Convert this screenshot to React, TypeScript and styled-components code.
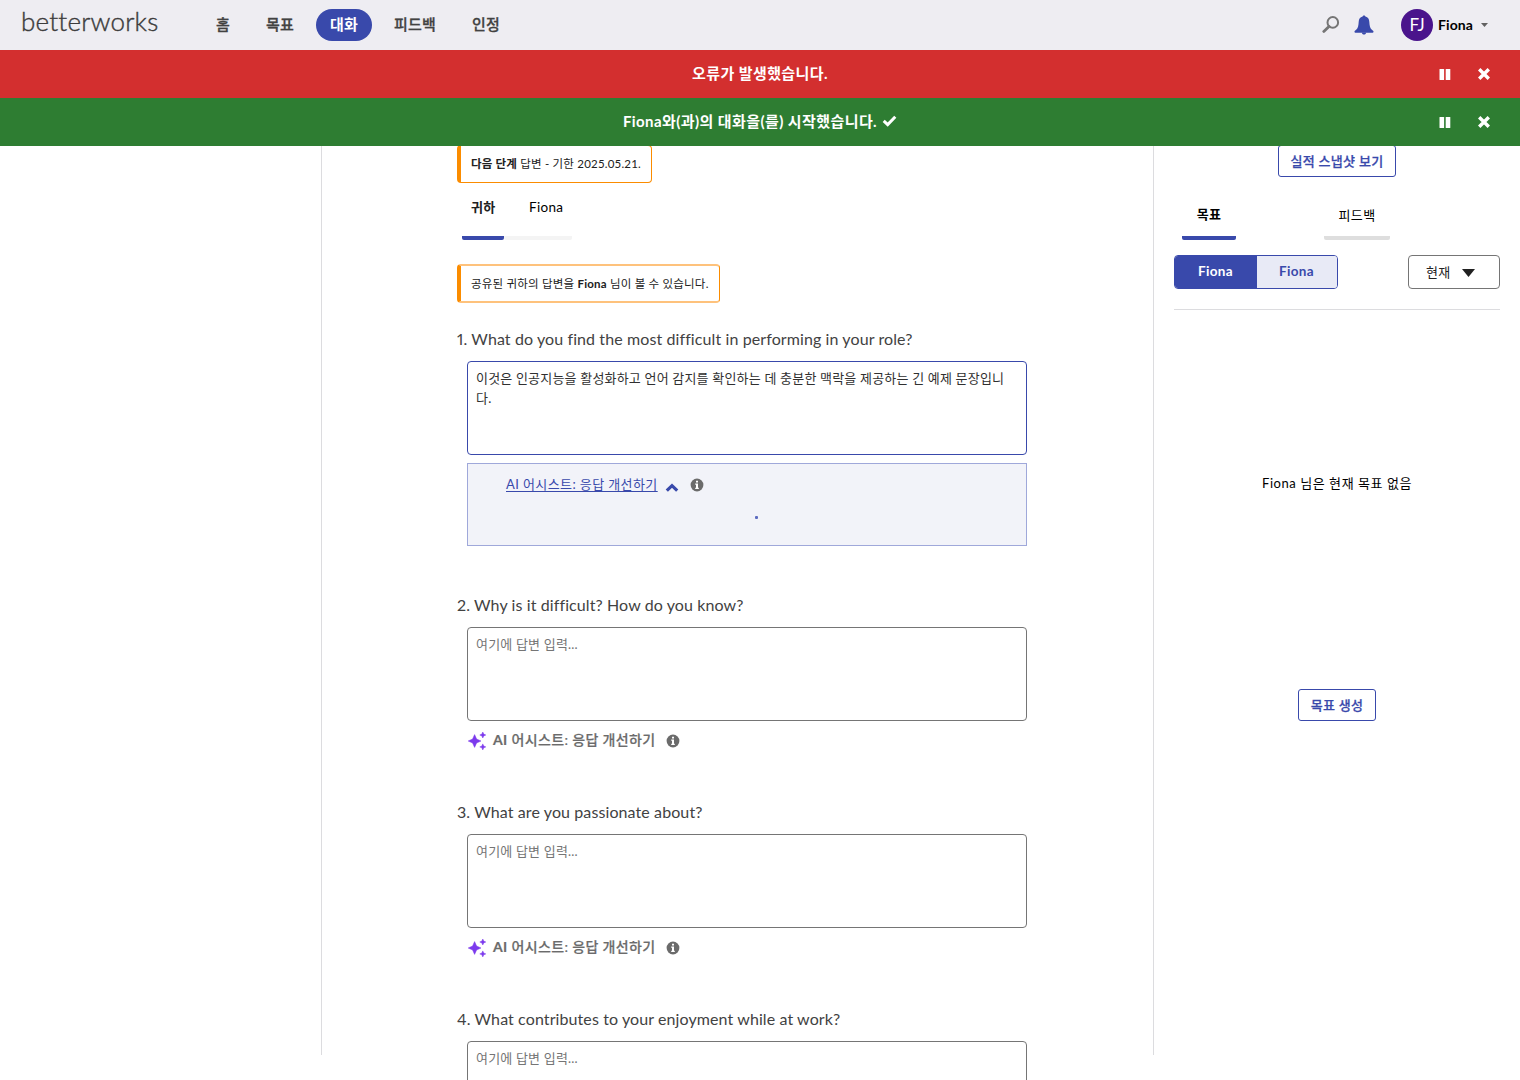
import React from 'react';
import styled, { createGlobalStyle } from 'styled-components';

const Global = createGlobalStyle`
  *, *::before, *::after { box-sizing: border-box; }
  body { margin: 0; background: #fff; overflow: hidden; }
  button, textarea { font: inherit; letter-spacing: inherit; }
`;

const BLUE = '#3949ab';

const Page = styled.div`
  height: 1080px;
  overflow: hidden;
  display: flex;
  flex-direction: column;
  font-family: Lato, 'Noto Sans CJK KR', sans-serif;
  font-size: 13px;
  letter-spacing: 0.3px;
  color: #212121;
`;

const TopBar = styled.header`
  flex: none;
  height: 50px;
  background: #eeedf2;
  display: flex;
  align-items: center;
  padding: 0 32px 0 21px;
`;

const Logo = styled.a`
  width: 181px;
  font-size: 26px;
  font-weight: 300;
  letter-spacing: 0.2px;
  line-height: 30px;
  margin-top: -9px;
  color: #3c3c3c;
  -webkit-text-stroke: 0.4px #3c3c3c;
`;

const Nav = styled.nav`
  display: flex;
  gap: 8px;
`;

const NavItem = styled.a<{ $active?: boolean }>`
  height: 32px;
  line-height: 30px;
  padding: 0 14px;
  border-radius: 16px;
  font-size: 15px;
  font-weight: ${p => (p.$active ? 700 : 500)};
  -webkit-text-stroke: ${p => (p.$active ? '0' : '0.3px')};
  letter-spacing: 0.2px;
  color: ${p => (p.$active ? '#fff' : '#424242')};
  background: ${p => (p.$active ? BLUE : 'transparent')};
`;

const UserArea = styled.div`
  margin-left: auto;
  display: flex;
  align-items: center;
  svg { display: block; }
`;

const Avatar = styled.span`
  width: 32px;
  height: 32px;
  margin: 0 5px 0 27px;
  border-radius: 50%;
  background: #4a148c;
  color: #fff;
  font-size: 17px;
  line-height: 32px;
  letter-spacing: 0;
  text-align: center;
`;

const UserName = styled.span`
  font-size: 14px;
  font-weight: 700;
  letter-spacing: 0.1px;
  color: #000;
  margin: -2px 8px 0 0;
`;

const Banner = styled.div<{ $tone: string }>`
  flex: none;
  height: 48px;
  background: ${p => p.$tone};
  color: #fff;
  display: grid;
  grid-template-columns: 1fr auto 1fr;
  align-items: center;
  font-size: 15px;
  font-weight: 700;
  letter-spacing: 0.42px;
  svg { display: block; }
`;

const BannerText = styled.div`
  grid-column: 2;
  display: flex;
  align-items: center;
  gap: 5px;
  line-height: 22px;
  margin-top: -2px;
`;

const BannerActions = styled.div`
  display: flex;
  justify-content: flex-end;
  align-items: center;
  gap: 27px;
  padding-right: 30px;
`;

const Body = styled.div`
  height: 934px;
  overflow: hidden;
  display: grid;
  grid-template-columns: 321px 833px 366px;
`;

const Main = styled.main`
  grid-column: 2;
  height: 909px;
  border: solid #dcdcdf;
  border-width: 0 1px;
  padding-left: 135px;
`;

const Notice = styled.div<{ $w: number }>`
  width: ${p => p.$w}px;
  height: 38px;
  line-height: 36px;
  padding-left: 10px;
  border: 1px solid #fb8c00;
  border-left-width: 4px;
  border-radius: 4px;
  font-size: 11.5px;
  letter-spacing: 0.2px;
  white-space: nowrap;
  b { font-weight: 700; }
`;

const StageNotice = styled(Notice)`
  margin-top: -1px;
`;

const SharedNotice = styled(Notice)`
  height: 39px;
  line-height: 35px;
  border-top: 2px solid #fec27c;
  border-bottom: 2px solid #fec27c;
`;

const People = styled.div`
  display: flex;
  margin: 0 0 24px 5px;
  height: 57px;
`;

const Person = styled.div<{ $active?: boolean; $w: number }>`
  width: ${p => p.$w}px;
  padding-top: 14px;
  line-height: 20px;
  padding-left: ${p => (p.$active ? 9 : 25)}px;
  font-size: ${p => (p.$active ? 13 : 13.5)}px;
  font-weight: ${p => (p.$active ? 700 : 400)};
  color: ${p => (p.$active ? '#212121' : '#000')};
  border-bottom: 4px solid ${p => (p.$active ? BLUE : '#f4f4f4')};
  border-radius: 2px;
`;

const Question = styled.section<{ $h: number }>`
  height: ${p => p.$h}px;
`;

const FirstQuestion = styled(Question)`
  margin-top: 24px;
`;

const Title = styled.h2`
  margin: 0 0 10px;
  height: 24px;
  line-height: 23px;
  font-size: 16px;
  font-weight: 400;
  font-variant-numeric: proportional-nums;
  letter-spacing: 0.1px;
  color: #424242;
`;

const Answer = styled.textarea<{ $focus?: boolean }>`
  display: block;
  width: 560px;
  height: 94px;
  margin-left: 10px;
  padding: 6px 8px;
  resize: none;
  outline: none;
  overflow: hidden;
  line-height: 20px;
  letter-spacing: 0.19px;
  border: 1px solid ${p => (p.$focus ? BLUE : '#757575')};
  border-radius: 4px;
  background: #fff;
  color: #303030;
  &::placeholder { color: #757575; }
`;

const AssistRow = styled.div`
  display: flex;
  align-items: center;
  height: 22px;
  margin: 9px 0 0 11px;
  font-size: 14px;
  font-weight: 500;
  letter-spacing: 0.35px;
  color: #6b6b6b;
  span { margin: -2px 11px 0 6px; line-height: 20px; -webkit-text-stroke: 0.2px; }
  b { font-weight: 700; }
`;

const AssistPanel = styled.div`
  width: 560px;
  height: 83px;
  margin: 8px 0 0 10px;
  border: 1px solid #9fa8da;
  background: #f2f3f9;
  display: flex;
  flex-direction: column;
`;

const AssistHead = styled.div`
  display: flex;
  align-items: center;
  height: 20px;
  margin: 11px 0 0 38px;
  letter-spacing: 0.4px;
  a {
    color: ${BLUE};
    text-decoration: underline;
    text-decoration-thickness: 1px;
    text-underline-offset: 2px;
    line-height: 20px;
    margin-top: -2px;
  }
  svg:nth-of-type(1) { margin: 4px 11px 0 7px; }
`;

const LoadingDot = styled.i`
  width: 3px;
  height: 3px;
  border-radius: 1px;
  background: #5c6bc0;
  margin: 21px 0 0 287px;
`;

const Side = styled.aside`
  padding: 0 20px;
  display: flex;
  flex-direction: column;
`;

const OutlineButton = styled.button<{ $w: number }>`
  align-self: center;
  width: ${p => p.$w}px;
  height: 32px;
  padding: 0 0 2px;
  border: 1px solid ${BLUE};
  border-radius: 3px;
  background: #fff;
  color: ${BLUE};
  font-weight: 500;
  -webkit-text-stroke: 0.25px;
`;

const SnapshotButton = styled(OutlineButton)`
  margin-top: -1px;
`;

const Tabs = styled.div`
  display: flex;
  gap: 88px;
  margin: 15px 0 15px 8px;
`;

const Tab = styled.div<{ $active?: boolean; $w: number }>`
  width: ${p => p.$w}px;
  height: 48px;
  line-height: ${p => (p.$active ? 44 : 46)}px;
  text-align: center;
  color: #000;
  font-weight: ${p => (p.$active ? 700 : 400)};
  border-bottom: 4px solid ${p => (p.$active ? BLUE : '#dedede')};
  border-radius: 2px;
`;

const Filters = styled.div`
  display: flex;
  justify-content: space-between;
  padding-bottom: 20px;
  border-bottom: 1px solid #dcdcdf;
`;

const Toggle = styled.div`
  display: flex;
  width: 164px;
  height: 34px;
  border: 1px solid ${BLUE};
  border-radius: 4px;
  overflow: hidden;
`;

const ToggleItem = styled.button<{ $active?: boolean }>`
  flex: ${p => (p.$active ? '0 0 82px' : '1')};
  border: 0;
  padding: 0 1px 2px 0;
  font-size: 13.5px;
  font-weight: 700;
  color: ${p => (p.$active ? '#fff' : BLUE)};
  background: ${p => (p.$active ? BLUE : '#e8eaf6')};
`;

const Period = styled.button`
  width: 92px;
  height: 34px;
  display: flex;
  align-items: center;
  gap: 11px;
  padding: 0 0 2px 17px;
  border: 1px solid #757575;
  border-radius: 4px;
  background: #fff;
  color: #212121;
  svg { margin-top: 4px; }
`;

const Empty = styled.p`
  margin: 163px 0 196px;
  line-height: 20px;
  text-align: center;
  letter-spacing: 0.55px;
  color: #000;
`;

const BellSvg = styled.svg`
  margin-left: 14px;
`;

const SearchIcon = () => (
  <svg width="18" height="18" viewBox="0 0 18 18" fill="none" stroke="#757575">
    <circle cx="10.8" cy="6.4" r="5.3" strokeWidth="2" />
    <path d="M7 10.4L1.800 15.400" strokeWidth="2.8" strokeLinecap="round" />
  </svg>
);

const BellIcon = () => (
  <BellSvg width="20" height="20" viewBox="0 0 20 20" fill={BLUE}>
    <path d="M10 .4c.8 0 1.300.5 1.400 1.200 2.600.6 3.700 2.400 3.900 5.200.2 3.600.7 6.200 2.300 7.800.6.6 1.200 1 1.700 1.500.5.6.2 1.700-.6 1.700H1.300c-.8 0-1.100-1.100-.6-1.700.5-.5 1.100-.9 1.700-1.500 1.600-1.600 2.100-4.200 2.300-7.800.2-2.800 1.300-4.600 3.900-5.200C8.700.9 9.200.4 10 .4z" />
    <path d="M7.800 17.500h4.400c-.1 1.300-1 2.100-2.200 2.100s-2.100-.8-2.200-2.100z" />
  </BellSvg>
);

const PauseIcon = () => (
  <svg width="12" height="12" viewBox="0 0 12 12" fill="#fff">
    <rect x=".5" y="1" width="4.600" height="11" rx=".5" />
    <rect x="6.700" y="1" width="4.600" height="11" rx=".5" />
  </svg>
);

const CloseIcon = () => (
  <svg width="12" height="12" viewBox="0 0 12 12" stroke="#fff" strokeWidth="3.400">
    <path d="M1.200 1.200L10.800 10.800M10.800 1.200L1.200 10.800" />
  </svg>
);

const CheckIcon = () => (
  <svg width="15" height="12" viewBox="0 0 14 12" fill="none" stroke="#fff" strokeWidth="3">
    <path d="M1.200 5.800L5.200 9.600L12.800 1.800" />
  </svg>
);

const InfoIcon = () => (
  <svg width="14" height="14" viewBox="0 0 14 14">
    <circle cx="7" cy="7" r="6.400" fill="#6b6b6b" />
    <path d="M6 2.700h2v1.800H6zM5.200 5.600H8v4.200h.8V11H5.200V9.800H6v-3h-.8z" fill="#fff" />
  </svg>
);

const ChevronUp = () => (
  <svg width="14" height="9" viewBox="0 0 14 9" fill="none" stroke={BLUE} strokeWidth="3.200">
    <path d="M1.800 7.600L7 2.600L12.200 7.600" />
  </svg>
);

const Sparkles = () => (
  <svg width="19" height="20" viewBox="0 0 19 20" fill="#7c3aed" stroke="#7c3aed" strokeWidth=".5" strokeLinejoin="round">
    <path d="M6.600 3.600L8.600 8L13 10L8.600 12L6.600 16.400L4.600 12L.2 10L4.600 8z" />
    <path d="M14.800 1l.9 2.100 2.100.9-2.100.9-.9 2.100-.9-2.100-2.100-.9 2.100-.9zM14.800 12.900l.9 2.100 2.100.9-2.100.9-.9 2.100-.9-2.100-2.100-.9 2.100-.9z" />
  </svg>
);

const CaretDown = ({ w, h, color }: { w: number; h: number; color: string }) => (
  <svg width={w} height={h} viewBox="0 0 14 8" preserveAspectRatio="none" fill={color}>
    <path d="M0 0h14L7 8z" />
  </svg>
);

const navItems = ['홈', '목표', '대화', '피드백', '인정'];

const laterQuestions = [
  { title: '2. Why is it difficult? How do you know?', assist: true },
  { title: '3. What are you passionate about?', assist: true },
  { title: '4. What contributes to your enjoyment while at work?', assist: false },
];

const Actions = () => (
  <BannerActions>
    <PauseIcon />
    <CloseIcon />
  </BannerActions>
);

export default function App() {
  return (
    <Page>
      <Global />
      <TopBar>
        <Logo>betterworks</Logo>
        <Nav>
          {navItems.map(n => (
            <NavItem key={n} $active={n === '대화'}>{n}</NavItem>
          ))}
        </Nav>
        <UserArea>
          <SearchIcon />
          <BellIcon />
          <Avatar>FJ</Avatar>
          <UserName>Fiona</UserName>
          <CaretDown w={7} h={4} color="#616161" />
        </UserArea>
      </TopBar>
      <Banner $tone="#d32f2f">
        <BannerText>오류가 발생했습니다.</BannerText>
        <Actions />
      </Banner>
      <Banner $tone="#2e7d32">
        <BannerText>
          Fiona와(과)의 대화을(를) 시작했습니다.
          <CheckIcon />
        </BannerText>
        <Actions />
      </Banner>
      <Body>
        <Main>
          <StageNotice $w={195}><b>다음 단계</b> 답변 - 기한 2025.05.21.</StageNotice>
          <People>
            <Person $active $w={42}>귀하</Person>
            <Person $w={68}>Fiona</Person>
          </People>
          <SharedNotice $w={263}>공유된 귀하의 답변을 <b>Fiona</b> 님이 볼 수 있습니다.</SharedNotice>
          <FirstQuestion $h={266}>
            <Title>1. What do you find the most difficult in performing in your role?</Title>
            <Answer $focus readOnly value="이것은 인공지능을 활성화하고 언어 감지를 확인하는 데 충분한 맥락을 제공하는 긴 예제 문장입니다." />
            <AssistPanel>
              <AssistHead>
                <a>AI 어시스트: 응답 개선하기</a>
                <ChevronUp />
                <InfoIcon />
              </AssistHead>
              <LoadingDot />
            </AssistPanel>
          </FirstQuestion>
          {laterQuestions.map(q => (
            <Question key={q.title} $h={207}>
              <Title>{q.title}</Title>
              <Answer readOnly placeholder="여기에 답변 입력..." />
              {q.assist && (
                <AssistRow>
                  <Sparkles />
                  <span><b>AI</b> 어시스트: 응답 개선하기</span>
                  <InfoIcon />
                </AssistRow>
              )}
            </Question>
          ))}
        </Main>
        <Side>
          <SnapshotButton $w={118}>실적 스냅샷 보기</SnapshotButton>
          <Tabs>
            <Tab $active $w={54}>목표</Tab>
            <Tab $w={66}>피드백</Tab>
          </Tabs>
          <Filters>
            <Toggle>
              <ToggleItem $active>Fiona</ToggleItem>
              <ToggleItem>Fiona</ToggleItem>
            </Toggle>
            <Period>현재 <CaretDown w={13} h={8} color="#212121" /></Period>
          </Filters>
          <Empty>Fiona 님은 현재 목표 없음</Empty>
          <OutlineButton $w={78}>목표 생성</OutlineButton>
        </Side>
      </Body>
    </Page>
  );
}
